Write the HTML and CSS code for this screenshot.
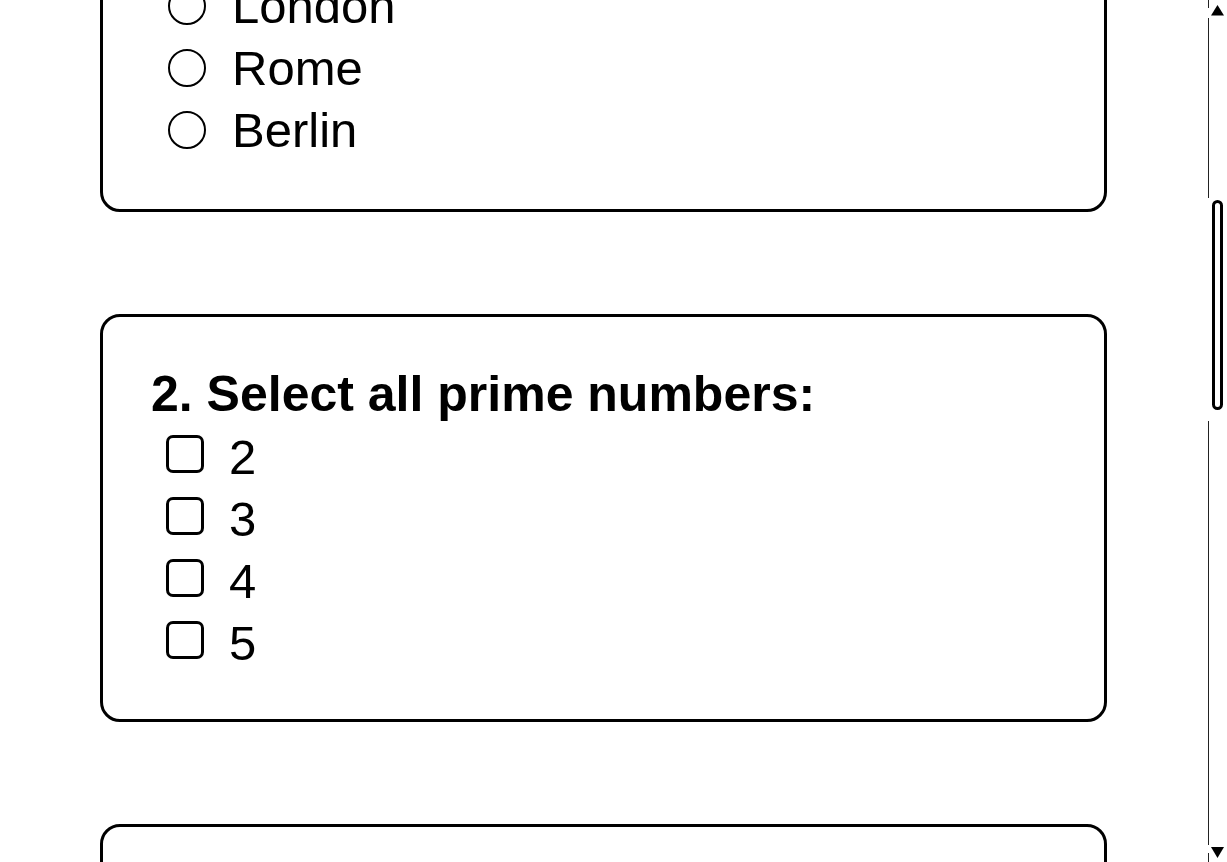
FILE: index.html
```html
<!DOCTYPE html>
<html lang="en">
<head>
<meta charset="utf-8">
<title>Quiz</title>
<link rel="stylesheet" href="styles.css">
</head>
<body>
<div class="page">
  <main class="viewport">
    <div class="content">
      <section class="card">
        <h2 class="question">1. What is the capital of France?</h2>
        <label class="option"><input type="radio" name="q1" class="radio"><span class="text">Paris</span></label>
        <label class="option"><input type="radio" name="q1" class="radio"><span class="text">London</span></label>
        <label class="option"><input type="radio" name="q1" class="radio"><span class="text">Rome</span></label>
        <label class="option"><input type="radio" name="q1" class="radio"><span class="text">Berlin</span></label>
      </section>
      <section class="card">
        <h2 class="question">2. Select all prime numbers:</h2>
        <label class="option check"><input type="checkbox" class="checkbox"><span class="text">2</span></label>
        <label class="option check"><input type="checkbox" class="checkbox"><span class="text">3</span></label>
        <label class="option check"><input type="checkbox" class="checkbox"><span class="text">4</span></label>
        <label class="option check"><input type="checkbox" class="checkbox"><span class="text">5</span></label>
      </section>
      <section class="card">
        <h2 class="question">3. What is 5 + 7?</h2>
        <label class="option"><input type="radio" name="q3" class="radio"><span class="text">10</span></label>
        <label class="option"><input type="radio" name="q3" class="radio"><span class="text">12</span></label>
      </section>
    </div>
  </main>
  <aside class="scrollbar" aria-hidden="true">
    <svg width="20" height="862" viewBox="0 0 20 862">
      <g stroke="#222" stroke-width="1" fill="none">
        <line x1="1.5" y1="0" x2="1.5" y2="8"/>
        <line x1="1.5" y1="18" x2="1.5" y2="198"/>
        <line x1="1.5" y1="421" x2="1.5" y2="845"/>
        <line x1="1.5" y1="853" x2="1.5" y2="862"/>
      </g>
      <polygon points="4,15.5 17,15.5 10.5,5" fill="#000"/>
      <polygon points="4,847 17,847 10.5,858" fill="#000"/>
      <rect x="6.5" y="201.5" width="8" height="207" rx="4" ry="4" fill="#fff" stroke="#000" stroke-width="3"/>
    </svg>
  </aside>
</div>
</body>
</html>
```

FILE: styles.css
```css
* {
  box-sizing: border-box;
}

html, body {
  margin: 0;
  padding: 0;
  height: 100%;
  overflow: hidden;
  background: #fff;
}

body {
  font-family: "Liberation Sans", Arial, sans-serif;
  color: #000;
}

.page {
  display: flex;
  width: 1227px;
  height: 862px;
}

.viewport {
  flex: 1;
  overflow: hidden;
  padding: 0 100px;
}

.content {
  display: flex;
  flex-direction: column;
  gap: 102px;
  margin-top: -196px;
}

.card {
  border: 3px solid #000;
  border-radius: 20px;
  padding: 49px 48px 48px 48px;
  display: flex;
  flex-direction: column;
}

.question {
  margin: 0;
  font-size: 50px;
  line-height: 57px;
  font-weight: bold;
}

.option {
  display: flex;
  align-items: center;
  height: 62px;
  font-size: 49px;
  line-height: 55px;
}

.radio,
.checkbox {
  appearance: none;
  -webkit-appearance: none;
  margin: 0;
  flex: 0 0 auto;
  width: 38px;
  height: 38px;
  background: #fff;
}

.radio {
  border: 2.5px solid #000;
  border-radius: 50%;
  margin-left: 17px;
  margin-right: 26px;
}

.checkbox {
  border: 3px solid #000;
  border-radius: 7px;
  margin-left: 15px;
  margin-right: 25px;
}

.check .text {
  margin-top: 7px;
}

.scrollbar {
  flex: 0 0 20px;
  width: 20px;
  height: 862px;
}

.scrollbar svg {
  display: block;
}
```
